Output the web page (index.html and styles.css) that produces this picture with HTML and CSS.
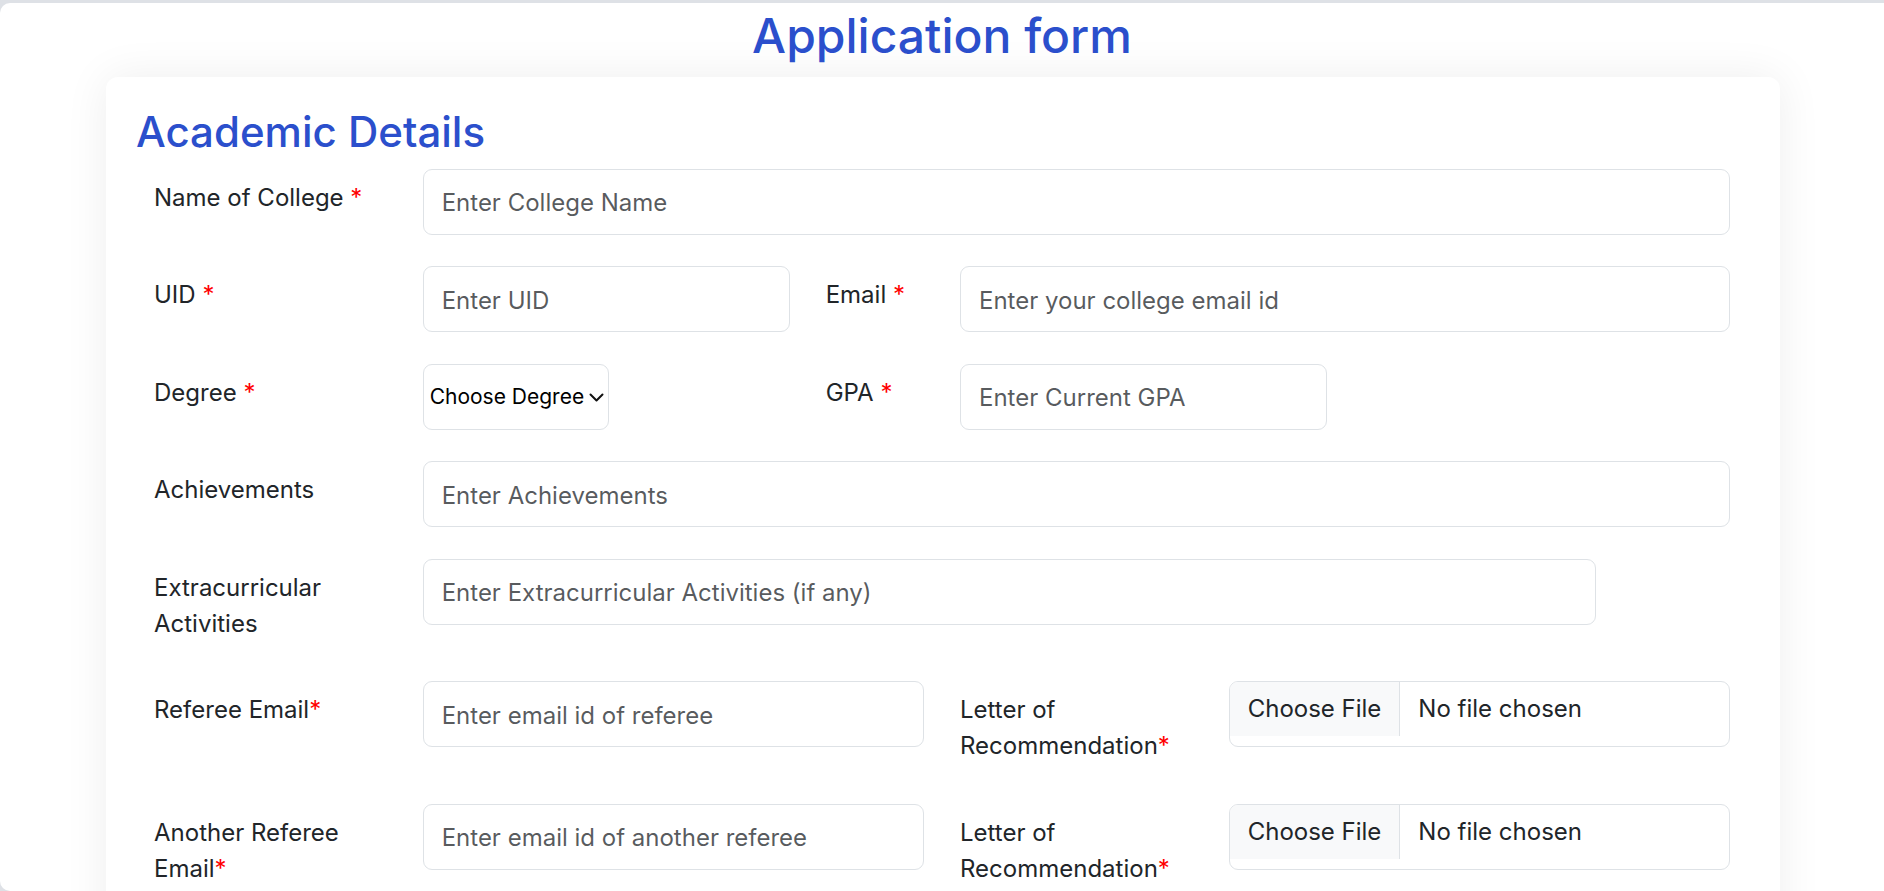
FILE: index.html
```html
<!DOCTYPE html>
<html lang="en">
<head>
<meta charset="utf-8">
<title>Application form</title>
<link rel="stylesheet" href="styles.css">
</head>
<body>
<div class="page">
  <h1 class="page-title">Application form</h1>
  <div class="card">
    <h2 class="section-title">Academic Details</h2>
    <form class="form">
      <div class="row">
        <label class="label span-2">Name of College <span class="req">*</span></label>
        <div class="span-10"><input class="field" type="text" placeholder="Enter College Name"></div>
      </div>
      <div class="row">
        <label class="label span-2">UID <span class="req">*</span></label>
        <div class="span-3"><input class="field" type="text" placeholder="Enter UID"></div>
        <label class="label span-1">Email <span class="req">*</span></label>
        <div class="span-6"><input class="field" type="email" placeholder="Enter your college email id"></div>
      </div>
      <div class="row">
        <label class="label span-2">Degree <span class="req">*</span></label>
        <div class="span-3">
          <div class="select-wrap">
            <select class="select">
              <option>Choose Degree</option>
              <option>B.Tech</option>
              <option>M.Tech</option>
            </select>
            <svg class="chevron" width="15" height="9" viewBox="0 0 15 9"><polyline points="1.5,1.5 7.5,7.5 13.5,1.5" fill="none" stroke="#111" stroke-width="2" stroke-linecap="round" stroke-linejoin="round"/></svg>
          </div>
        </div>
        <label class="label span-1">GPA <span class="req">*</span></label>
        <div class="span-3"><input class="field" type="text" placeholder="Enter Current GPA"></div>
      </div>
      <div class="row">
        <label class="label span-2">Achievements</label>
        <div class="span-10"><input class="field" type="text" placeholder="Enter Achievements"></div>
      </div>
      <div class="row">
        <label class="label span-2">Extracurricular Activities</label>
        <div class="span-9"><input class="field" type="text" placeholder="Enter Extracurricular Activities (if any)"></div>
      </div>
      <div class="row">
        <label class="label span-2">Referee Email<span class="req">*</span></label>
        <div class="span-4"><input class="field" type="email" placeholder="Enter email id of referee"></div>
        <label class="label span-2">Letter of Recommendation<span class="req">*</span></label>
        <div class="span-4">
          <label class="file"><input class="file-input" type="file"><span class="file-btn">Choose File</span><span class="file-name">No file chosen</span></label>
        </div>
      </div>
      <div class="row">
        <label class="label span-2">Another Referee Email<span class="req">*</span></label>
        <div class="span-4"><input class="field" type="email" placeholder="Enter email id of another referee"></div>
        <label class="label span-2">Letter of Recommendation<span class="req">*</span></label>
        <div class="span-4">
          <label class="file"><input class="file-input" type="file"><span class="file-btn">Choose File</span><span class="file-name">No file chosen</span></label>
        </div>
      </div>
    </form>
  </div>
</div>
</body>
</html>
```

FILE: styles.css
```css
* {
  box-sizing: border-box;
}

body {
  margin: 0;
  background: #dee1e6;
  font-family: Inter, "Noto Sans", sans-serif;
  color: #212529;
}

.page {
  margin-top: 3px;
  height: 888px;
  background: #ffffff;
  border-radius: 10px 0 0 10px;
  overflow: hidden;
  padding-top: 4px;
}

.page-title {
  margin: 0 0 12px;
  text-align: center;
  font-size: 48px;
  font-weight: 500;
  line-height: 1.2;
  color: #2b4fcc;
}

.card {
  margin: 0 104px 0 106px;
  background: #ffffff;
  border-radius: 12px;
  box-shadow: 0 0 45px rgba(0, 0, 0, 0.07);
  padding: 30px 32px 30px 30px;
}

.section-title {
  margin: 0 0 12px;
  font-size: 42px;
  font-weight: 500;
  line-height: 1.2;
  color: #2b4fcc;
}

.form {
  padding: 0 18px;
}

.row {
  display: grid;
  grid-template-columns: repeat(12, minmax(0, 1fr));
  column-gap: 36px;
  align-items: start;
  margin-bottom: 31.5px;
}

.span-1 { grid-column: span 1; }
.span-2 { grid-column: span 2; }
.span-3 { grid-column: span 3; }
.span-4 { grid-column: span 4; }
.span-6 { grid-column: span 6; }
.span-9 { grid-column: span 9; }
.span-10 { grid-column: span 10; }

.label {
  font-size: 24px;
  line-height: 36px;
  padding: 11px 0 8px;
}

.req {
  color: #ff0000;
}

.field {
  display: block;
  width: 100%;
  height: 66px;
  padding: 2px 18px 0;
  border: 1px solid #dee2e6;
  border-radius: 9px;
  background: #ffffff;
  font-family: Inter, "Noto Sans", sans-serif;
  font-size: 24px;
  color: #212529;
  outline: none;
}

.field::placeholder {
  color: rgba(33, 37, 41, 0.75);
  opacity: 1;
}

.select-wrap {
  position: relative;
  display: inline-block;
}

.select {
  appearance: none;
  -webkit-appearance: none;
  display: block;
  width: 186px;
  height: 66px;
  padding: 0 22px 0 6px;
  border: 1px solid #dee2e6;
  border-radius: 9px;
  background: #ffffff;
  font-family: Inter, "Noto Sans", sans-serif;
  font-size: 21px;
  color: #000000;
  outline: none;
}

.chevron {
  position: absolute;
  right: 5px;
  top: 29px;
  pointer-events: none;
}

.file {
  display: flex;
  align-items: flex-start;
  width: 100%;
  height: 66px;
  border: 1px solid #dee2e6;
  border-radius: 9px;
  overflow: hidden;
  font-size: 24px;
  line-height: 36px;
  color: #212529;
  cursor: pointer;
}

.file-input {
  display: none;
}

.file-btn {
  padding: 9px 18px;
  background: #f8f9fa;
  border-right: 1px solid #dee2e6;
}

.file-name {
  padding: 9px 0 9px 18px;
}
```
